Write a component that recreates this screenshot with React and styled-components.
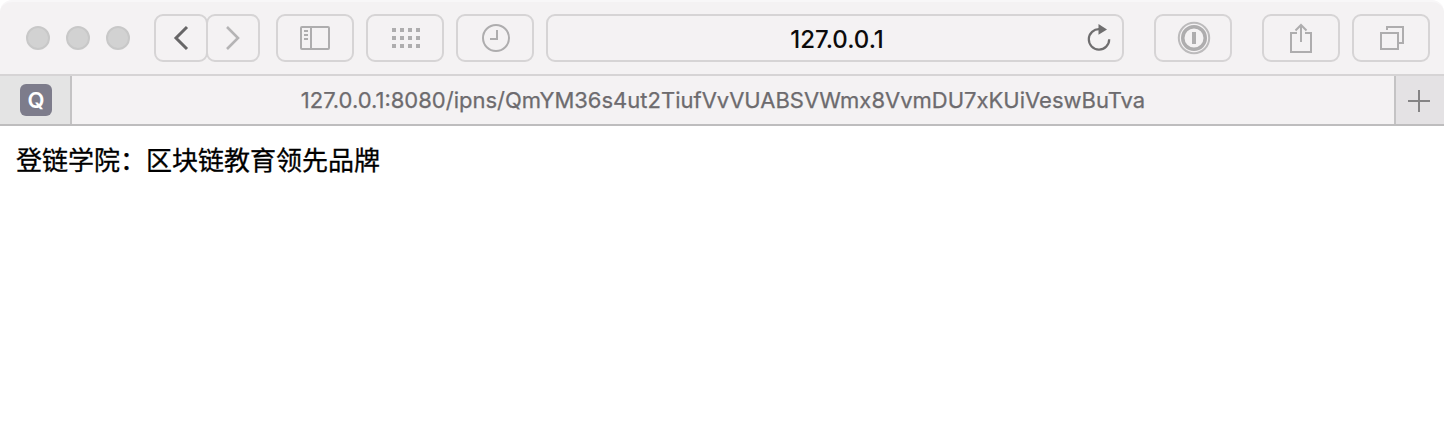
import React from "react";
import styled, { createGlobalStyle } from "styled-components";

const GlobalStyle = createGlobalStyle`
  * { box-sizing: border-box; }
  body {
    margin: 0;
    background: #fff;
    font-family: Inter, "Noto Sans CJK SC", sans-serif;
  }
`;

const Window = styled.div`
  width: 1444px;
  height: 432px;
  display: flex;
  flex-direction: column;
  background: #fff;
  overflow: hidden;
`;

const Toolbar = styled.header`
  height: 76px;
  display: flex;
  align-items: center;
  padding: 0 14px 0 26px;
  background: #f4f2f3;
  border-top: 2px solid #f8f7f8;
  border-bottom: 2px solid #d6d4d5;
  border-radius: 12px 12px 0 0;
`;

const Lights = styled.div`
  display: flex;
  gap: 16px;
  margin-right: 24px;
`;

const Light = styled.span`
  width: 24px;
  height: 24px;
  border-radius: 50%;
  background: #d2d2d2;
  border: 2px solid #c8c8c8;
`;

const Button = styled.button`
  width: ${(p) => p.$width || 78}px;
  height: 48px;
  margin: 0 ${(p) => p.$after || 0}px 0 0;
  padding: 0 0 0 ${(p) => p.$inset || 0}px;
  display: flex;
  align-items: center;
  justify-content: center;
  background: #f4f2f3;
  border: 2px solid #d6d4d5;
  border-radius: 9px;
  color: ${(p) => p.$color || "#aeadae"};
`;

const Address = styled.div`
  flex: none;
  width: 578px;
  height: 48px;
  margin-right: 30px;
  display: grid;
  grid-template-columns: 48px 1fr 48px;
  align-items: center;
  justify-items: center;
  border: 2px solid #d6d4d5;
  border-radius: 9px;
  color: #6f6e6f;
`;

const Host = styled.span`
  grid-column: 2;
  padding: 3px 0 0 4px;
  font-size: 24px;
  font-weight: 500;
  line-height: 28px;
  letter-spacing: 0;
  color: #0c0b0c;
`;

const TabBar = styled.nav`
  height: 50px;
  display: flex;
  background: #f4f2f3;
  border-bottom: 2px solid #bebdbe;
`;

const PinnedTab = styled.div`
  width: 72px;
  display: flex;
  align-items: center;
  padding-left: 20px;
  background: #e4e4e4;
  border-right: 2px solid #c4c3c4;
`;

const Badge = styled.span`
  width: 32px;
  height: 32px;
  display: flex;
  align-items: center;
  justify-content: center;
  border-radius: 6px;
  background: #7d7c8b;
  color: #fff;
  font-size: 22px;
  font-weight: 600;
  line-height: 32px;
`;

const ActiveTab = styled.div`
  flex: 1;
  text-align: center;
  padding-right: 20px;
  font-size: 22px;
  line-height: 49px;
  white-space: nowrap;
  color: #6d6b6e;
  -webkit-text-stroke: 0.25px currentColor;
`;

const NewTab = styled.div`
  width: 50px;
  display: flex;
  align-items: center;
  justify-content: center;
  padding: 2px 2px 0 0;
  background: #e4e2e4;
  border-left: 2px solid #c4c3c4;
  color: #858485;
`;

const Content = styled.main`
  padding: 15px 16px;
  font-family: "Noto Sans CJK SC", sans-serif;
  font-size: 26px;
  line-height: 36px;
  color: #000;
  -webkit-text-stroke: 0.3px currentColor;
`;

const Icon = styled.svg`
  display: block;
  flex: none;
  overflow: visible;
  fill: none;
  stroke: currentColor;
  stroke-width: ${(p) => p.$weight || 2};
`;

const BackIcon = () => (
  <Icon $weight={3} width="14" height="24" viewBox="0 0 14 24">
    <path d="M13 1 2 12l11 11" />
  </Icon>
);

const ForwardIcon = () => (
  <Icon $weight={2.6} width="14" height="24" viewBox="0 0 14 24">
    <path d="m1 1 11 11L1 23" />
  </Icon>
);

const SidebarIcon = () => (
  <Icon width="30" height="24" viewBox="0 0 30 24">
    <rect x="1" y="1" width="28" height="22" rx="1" />
    <path d="M11 1v22M4 5h4M4 9h4M4 13h4" />
  </Icon>
);

const GridIcon = () => (
  <Icon width="28" height="20" viewBox="0 0 28 20">
    {[0, 8, 16].map((y) =>
      [0, 8, 16, 24].map((x) => (
        <rect key={`${x}-${y}`} x={x} y={y} width="4" height="4" fill="currentColor" stroke="none" />
      ))
    )}
  </Icon>
);

const ClockIcon = () => (
  <Icon width="28" height="28" viewBox="0 0 28 28">
    <circle cx="14" cy="14" r="13" />
    <path d="M15 6v9H8" />
  </Icon>
);

const ReloadIcon = () => (
  <Icon $weight={2.2} width="24" height="28" viewBox="0 0 24 28">
    <path d="M13.5 5.2A10.2 10.2 0 1 0 23.2 15.3" />
    <path d="M12.5 0v10.8l8.5-5.2z" fill="currentColor" stroke="none" />
  </Icon>
);

const KeyIcon = () => (
  <Icon width="32" height="32" viewBox="0 0 32 32">
    <circle cx="16" cy="16" r="15.2" strokeOpacity="0.8" />
    <circle cx="16" cy="16" r="10.5" />
    <circle cx="16" cy="16" r="12" />
    <path d="M14 10h4v12h-4z" fill="currentColor" stroke="none" />
  </Icon>
);

const ShareIcon = () => (
  <Icon width="22" height="30" viewBox="0 0 22 30">
    <path d="M7 10H1v19h20V10h-6M11 19V2M5.5 7.5 11 2l5.5 5.5" />
  </Icon>
);

const TabsIcon = () => (
  <Icon width="24" height="24" viewBox="0 0 24 24">
    <rect x="1" y="7" width="17" height="16" />
    <path d="M7 4V1h16v16h-4" />
  </Icon>
);

const PlusIcon = () => (
  <Icon width="22" height="22" viewBox="0 0 22 22">
    <path d="M11 0v22M0 11h22" />
  </Icon>
);

export default function App() {
  return (
    <>
      <GlobalStyle />
      <Window>
        <Toolbar>
          <Lights>
            <Light />
            <Light />
            <Light />
          </Lights>
          <Button $width={54} $after={-2} $color="#676667" aria-label="Back"><BackIcon /></Button>
          <Button $width={54} $after={16} $color="#b5b4b5" aria-label="Forward"><ForwardIcon /></Button>
          <Button $after={12} aria-label="Sidebar"><SidebarIcon /></Button>
          <Button $after={12} $inset={2} aria-label="Top sites"><GridIcon /></Button>
          <Button $after={12} $inset={2} aria-label="History"><ClockIcon /></Button>
          <Address>
            <Host>127.0.0.1</Host>
            <ReloadIcon />
          </Address>
          <Button $after={30} $inset={2} aria-label="Passwords"><KeyIcon /></Button>
          <Button $after={12} aria-label="Share"><ShareIcon /></Button>
          <Button $inset={2} aria-label="Show all tabs"><TabsIcon /></Button>
        </Toolbar>
        <TabBar>
          <PinnedTab><Badge>Q</Badge></PinnedTab>
          <ActiveTab>127.0.0.1:8080/ipns/QmYM36s4ut2TiufVvVUABSVWmx8VvmDU7xKUiVeswBuTva</ActiveTab>
          <NewTab><PlusIcon /></NewTab>
        </TabBar>
        <Content>登链学院：区块链教育领先品牌</Content>
      </Window>
    </>
  );
}
